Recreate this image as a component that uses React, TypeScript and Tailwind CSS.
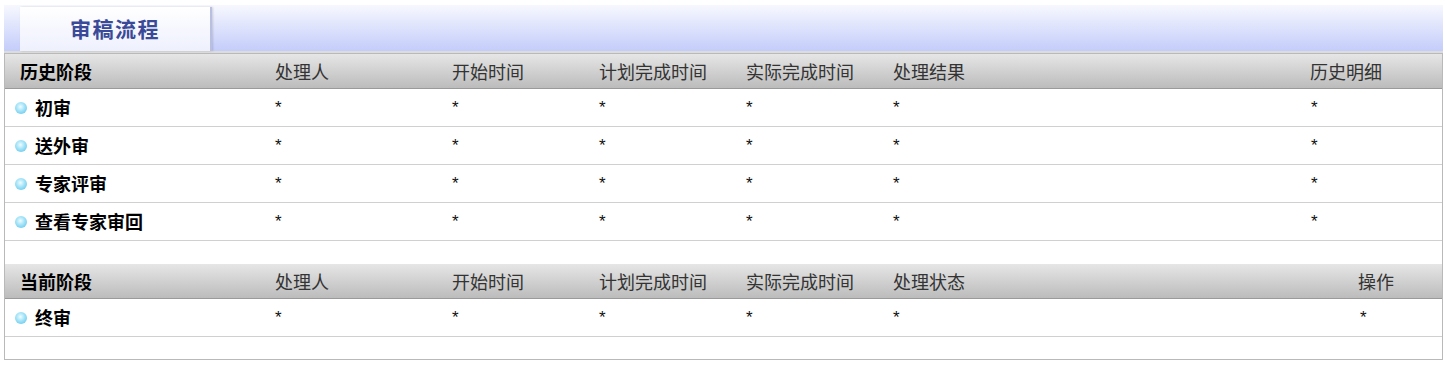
import React from 'react';

const font = { fontFamily: '"Noto Sans CJK SC", "Liberation Sans", sans-serif' };

const cols = 'grid grid-cols-[265px_177px_147px_147px_147px_417px_1fr]';

const history = ['初审', '送外审', '专家评审', '查看专家审回'];

const Dot = () => (
  <span className="inline-block w-[12px] h-[12px] rounded-full bg-[radial-gradient(circle_at_45%_40%,#f0fcff_0%,#9fe2f7_45%,#56bde8_100%)] mr-[8px] shrink-0" />
);

const Star = ({ pad }: { pad: string }) => (
  <div className={`${pad} text-[17px] font-normal text-[#111]`} style={{ fontFamily: '"Liberation Sans", sans-serif' }}>
    *
  </div>
);

function HeaderRow({ first, last, lastPad }: { first: string; last: string; lastPad: string }) {
  const heads = ['处理人', '开始时间', '计划完成时间', '实际完成时间', first === '历史阶段' ? '处理结果' : '处理状态'];
  return (
    <div className={`${cols} h-[35px] items-center bg-gradient-to-b from-[#e6e6e6] to-[#bcbcbc] border-b border-[#9a9a9a] text-[18px] text-[#333]`}>
      <div className="pl-[15px] font-bold text-black">{first}</div>
      {heads.map((h) => (
        <div key={h} className="pl-[5px]">{h}</div>
      ))}
      <div className={lastPad}>{last}</div>
    </div>
  );
}

function DataRow({ name, lastPad }: { name: string; lastPad: string }) {
  return (
    <div className={`${cols} h-[38px] items-center border-b border-[#d0d0d0]`}>
      <div className="pl-[10px] flex items-center font-bold text-[18px] text-black">
        <Dot />
        {name}
      </div>
      {[0, 1, 2, 3, 4].map((i) => (
        <Star key={i} pad="pl-[5px]" />
      ))}
      <Star pad={lastPad} />
    </div>
  );
}

export default function App() {
  return (
    <div className="w-[1447px] h-[366px] bg-white px-[4px] pt-[5px]" style={font}>
      <div className="h-[46px] bg-gradient-to-b from-[#f7f8fe] to-[#c4ccfa] flex items-end pl-[16px]">
        <div className="w-[192px] h-[44px] bg-gradient-to-b from-white to-[#eef0fd] border-r-2 border-[#b8bfe0] shadow-[1px_0_2px_rgba(0,0,0,0.15)] flex items-center justify-center">
          <span className="text-[21px] font-bold text-[#3a4a98] tracking-[1.5px]">审稿流程</span>
        </div>
      </div>
      <div className="h-[2px] bg-[#dcdcdc]" />
      <div className="h-[307px] border border-[#b9b9b9] flex flex-col">
        <HeaderRow first="历史阶段" last="历史明细" lastPad="pl-[5px]" />
        {history.map((n) => (
          <DataRow key={n} name={n} lastPad="pl-[6px]" />
        ))}
        <div className="h-[23px]" />
        <HeaderRow first="当前阶段" last="操作" lastPad="pl-[53px]" />
        <DataRow name="终审" lastPad="pl-[55px]" />
      </div>
    </div>
  );
}
